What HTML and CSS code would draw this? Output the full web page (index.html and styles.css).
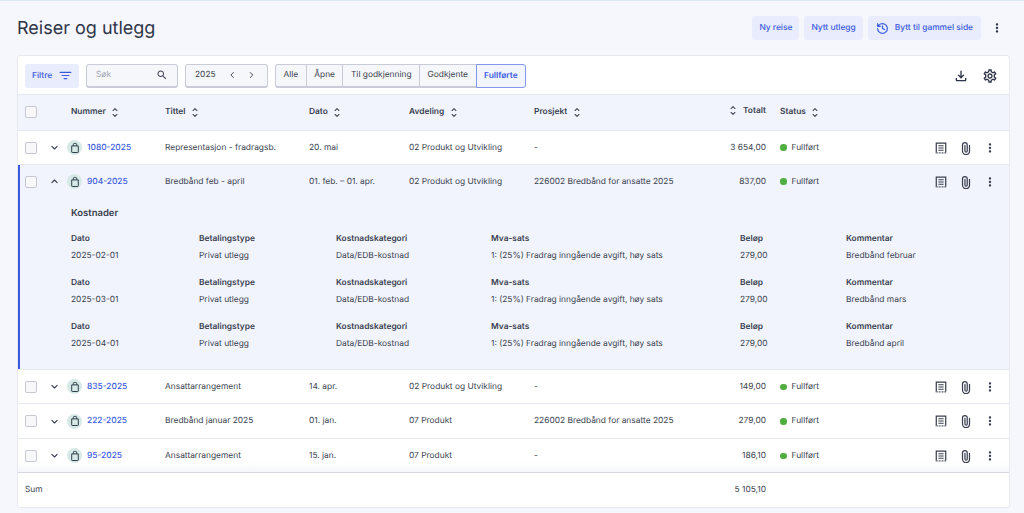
FILE: index.html
```html
<!DOCTYPE html>
<html lang="no">
<head>
  <meta charset="UTF-8" />
  <title>Reiser og utlegg</title>
  <link rel="stylesheet" href="styles.css">
</head>
<body>
  <svg class="sprites" width="0" height="0">
    <defs>
      <symbol id="i-more" viewBox="0 0 24 24"><path fill="currentColor" d="M12 8c1.1 0 2-.9 2-2s-.9-2-2-2-2 .9-2 2 .9 2 2 2zm0 2c-1.1 0-2 .9-2 2s.9 2 2 2 2-.9 2-2-.9-2-2-2zm0 6c-1.1 0-2 .9-2 2s.9 2 2 2 2-.9 2-2-.9-2-2-2z"/></symbol>
      <symbol id="i-sort" viewBox="0 0 10 14"><path fill="none" stroke="currentColor" stroke-width="1.3" stroke-linecap="round" stroke-linejoin="round" d="M2.500 4.500 5 2l2.500 2.500M2.500 9.500 5 12l2.500-2.500"/></symbol>
      <symbol id="i-down" viewBox="0 0 12 12"><path fill="none" stroke="currentColor" stroke-width="1.5" stroke-linecap="round" stroke-linejoin="round" d="M2.500 4.500 6 8l3.500-3.500"/></symbol>
      <symbol id="i-up" viewBox="0 0 12 12"><path fill="none" stroke="currentColor" stroke-width="1.5" stroke-linecap="round" stroke-linejoin="round" d="M2.500 7.500 6 4l3.500 3.500"/></symbol>
      <symbol id="i-bag" viewBox="0 0 16 16"><path fill="none" stroke="currentColor" stroke-width="1.3" stroke-linejoin="round" d="M3.600 5.200h8.800v8a.8.8 0 0 1-.8.8H4.400a.8.8 0 0 1-.8-.8zM5.800 5.200V3.200A1.200 1.200 0 0 1 7 2h2a1.200 1.200 0 0 1 1.200 1.200v2"/></symbol>
      <symbol id="i-receipt" viewBox="0 0 16 16"><path fill="none" stroke="currentColor" stroke-width="1.400" d="M2.600 13.200V2.500h10.800v10.700"/><path fill="none" stroke="currentColor" stroke-width="1.400" stroke-dasharray="1 .8" d="M2 13.600h12"/><path fill="none" stroke="currentColor" stroke-width="1.200" d="M5 5.500h6M5 8h6M5 10.500h6"/></symbol>
      <symbol id="i-clip" viewBox="0 0 16 16"><path fill="none" stroke="currentColor" stroke-width="1.400" stroke-linecap="round" d="M12 5v6.500a4 4 0 0 1-8 0V4.500a2.700 2.700 0 0 1 5.400 0v6.800a1.300 1.300 0 0 1-2.600 0V5"/></symbol>
    </defs>
  </svg>

  <header class="page-head">
    <h1>Reiser og utlegg</h1>
    <div class="head-actions">
      <button class="btn-soft">Ny reise</button>
      <button class="btn-soft">Nytt utlegg</button>
      <button class="btn-soft btn-switch">
        <svg class="icon-history" viewBox="0 0 24 24"><path fill="none" stroke="currentColor" stroke-width="2.200" stroke-linecap="round" stroke-linejoin="round" d="M3 12a9 9 0 1 0 9-9 9.750 9.750 0 0 0-6.740 2.740L3 8M3 3v5h5M12 7v5l4 2"/></svg>
        Bytt til gammel side
      </button>
      <svg class="icon-more head-more"><use href="#i-more"/></svg>
    </div>
  </header>

  <main class="card">
    <div class="toolbar">
      <button class="btn-soft btn-filter">
        Filtre
        <svg class="icon-filter" viewBox="0 0 14 10"><path fill="none" stroke="currentColor" stroke-width="1.300" stroke-linecap="round" d="M1 1.500h12M3.200 5h7.600M5.500 8.500h3"/></svg>
      </button>
      <div class="field search">
        <span>Søk</span>
        <svg class="icon-search" viewBox="0 0 24 24"><path fill="currentColor" d="M15.500 14h-.79l-.28-.27C15.410 12.590 16 11.110 16 9.500 16 5.910 13.090 3 9.500 3S3 5.910 3 9.500 5.910 16 9.500 16c1.610 0 3.090-.59 4.230-1.570l.27.28v.79l5 4.990L20.490 19l-4.990-5zm-6 0C7.010 14 5 11.990 5 9.500S7.010 5 9.500 5 14 7.010 14 9.500 11.990 14 9.500 14z"/></svg>
      </div>
      <div class="field year">
        <span class="year-label">2025</span>
        <svg class="icon-nav" viewBox="0 0 12 12"><path fill="none" stroke="currentColor" stroke-width="1.300" stroke-linecap="round" stroke-linejoin="round" d="M7.500 2.500 4 6l3.500 3.500"/></svg>
        <svg class="icon-nav" viewBox="0 0 12 12"><path fill="none" stroke="currentColor" stroke-width="1.300" stroke-linecap="round" stroke-linejoin="round" d="M4.500 2.500 8 6 4.500 9.500"/></svg>
      </div>
      <div class="segments">
        <span class="segment">Alle</span>
        <span class="segment">Åpne</span>
        <span class="segment">Til godkjenning</span>
        <span class="segment">Godkjente</span>
        <span class="segment active">Fullførte</span>
      </div>
      <div class="tool-icons">
        <svg class="icon-tool" viewBox="0 0 24 24"><path fill="currentColor" d="M18 15v3H6v-3H4v3c0 1.100.9 2 2 2h12c1.100 0 2-.9 2-2v-3h-2zm-1-4-1.410-1.410L13 12.170V4h-2v8.170L8.410 9.590 7 11l5 5 5-5z"/></svg>
        <svg class="icon-tool" viewBox="0 0 24 24"><path fill="currentColor" d="M19.430 12.980c.04-.32.07-.64.07-.98 0-.34-.03-.66-.07-.98l2.110-1.650c.19-.15.24-.42.12-.64l-2-3.460c-.09-.16-.26-.25-.44-.25-.06 0-.12.01-.17.03l-2.490 1c-.52-.4-1.080-.73-1.690-.98l-.38-2.650C14.460 2.180 14.250 2 14 2h-4c-.25 0-.46.18-.49.42l-.38 2.650c-.61.25-1.170.59-1.690.98l-2.490-1c-.06-.02-.12-.03-.18-.03-.17 0-.34.09-.43.25l-2 3.460c-.13.22-.07.49.12.64l2.110 1.650c-.04.32-.07.65-.07.98 0 .33.03.66.07.98l-2.110 1.650c-.19.15-.24.42-.12.64l2 3.460c.09.16.26.25.44.25.06 0 .12-.01.17-.03l2.490-1c.52.4 1.080.73 1.690.98l.38 2.650c.03.24.24.42.49.42h4c.25 0 .46-.18.49-.42l.38-2.650c.61-.25 1.170-.59 1.690-.98l2.490 1c.06.02.12.03.18.03.17 0 .34-.09.43-.25l2-3.460c.12-.22.07-.49-.12-.64l-2.110-1.650zm-1.980-1.710c.04.31.05.52.05.73 0 .21-.02.43-.05.73l-.14 1.130.89.7 1.080.84-.7 1.210-1.270-.51-1.040-.42-.9.68c-.43.32-.84.56-1.250.73l-1.060.43-.16 1.130-.2 1.350h-1.400l-.19-1.350-.16-1.130-1.060-.43c-.43-.18-.83-.41-1.230-.71l-.91-.7-1.060.43-1.270.51-.7-1.210 1.080-.84.89-.7-.14-1.130c-.03-.31-.05-.54-.05-.74s.02-.43.05-.73l.14-1.130-.89-.7-1.080-.84.7-1.210 1.270.51 1.040.42.9-.68c.43-.32.84-.56 1.250-.73l1.060-.43.16-1.130.2-1.350h1.390l.19 1.350.16 1.130 1.060.43c.43.18.83.41 1.230.71l.91.7 1.060-.43 1.270-.51.7 1.210-1.070.85-.89.7.14 1.130zM12 8c-2.210 0-4 1.790-4 4s1.790 4 4 4 4-1.790 4-4-1.790-4-4-4zm0 6c-1.100 0-2-.9-2-2s.9-2 2-2 2 .9 2 2-.9 2-2 2z"/></svg>
      </div>
    </div>

    <div class="row head-row">
      <div class="c-check"><span class="checkbox"></span></div>
      <div class="c-num"><span class="sort">Nummer <svg class="icon-sort"><use href="#i-sort"/></svg></span></div>
      <div><span class="sort">Tittel <svg class="icon-sort"><use href="#i-sort"/></svg></span></div>
      <div><span class="sort">Dato <svg class="icon-sort"><use href="#i-sort"/></svg></span></div>
      <div><span class="sort">Avdeling <svg class="icon-sort"><use href="#i-sort"/></svg></span></div>
      <div><span class="sort">Prosjekt <svg class="icon-sort"><use href="#i-sort"/></svg></span></div>
      <div class="c-total"><span class="sort"><svg class="icon-sort"><use href="#i-sort"/></svg> Totalt</span></div>
      <div class="c-status"><span class="sort">Status <svg class="icon-sort"><use href="#i-sort"/></svg></span></div>
      <div></div>
    </div>

    <div class="row row-first">
      <div class="c-check"><span class="checkbox"></span><svg class="icon-chev"><use href="#i-down"/></svg></div>
      <div class="c-id"><span class="bag"><svg><use href="#i-bag"/></svg></span><a>1080-2025</a></div>
      <div>Representasjon - fradragsb.</div>
      <div>20. mai</div>
      <div>02 Produkt og Utvikling</div>
      <div>-</div>
      <div class="c-total">3 654,00</div>
      <div class="c-status"><i class="dot"></i>Fullført</div>
      <div class="c-actions"><svg class="icon-act"><use href="#i-receipt"/></svg><svg class="icon-act"><use href="#i-clip"/></svg><svg class="icon-act"><use href="#i-more"/></svg></div>
    </div>

    <section class="expanded">
      <div class="row row-open">
        <div class="c-check"><span class="checkbox"></span><svg class="icon-chev"><use href="#i-up"/></svg></div>
        <div class="c-id"><span class="bag"><svg><use href="#i-bag"/></svg></span><a>904-2025</a></div>
        <div>Bredbånd feb - april</div>
        <div>01. feb. – 01. apr.</div>
        <div>02 Produkt og Utvikling</div>
        <div>226002 Bredbånd for ansatte 2025</div>
        <div class="c-total">837,00</div>
        <div class="c-status"><i class="dot"></i>Fullført</div>
        <div class="c-actions"><svg class="icon-act"><use href="#i-receipt"/></svg><svg class="icon-act"><use href="#i-clip"/></svg><svg class="icon-act"><use href="#i-more"/></svg></div>
      </div>
      <div class="costs">
        <h2>Kostnader</h2>
        <div class="cost-row">
          <div><b>Dato</b>2025-02-01</div>
          <div><b>Betalingstype</b>Privat utlegg</div>
          <div><b>Kostnadskategori</b>Data/EDB-kostnad</div>
          <div><b>Mva-sats</b>1: (25%) Fradrag inngående avgift, høy sats</div>
          <div><b>Beløp</b>279,00</div>
          <div><b>Kommentar</b>Bredbånd februar</div>
        </div>
        <div class="cost-row">
          <div><b>Dato</b>2025-03-01</div>
          <div><b>Betalingstype</b>Privat utlegg</div>
          <div><b>Kostnadskategori</b>Data/EDB-kostnad</div>
          <div><b>Mva-sats</b>1: (25%) Fradrag inngående avgift, høy sats</div>
          <div><b>Beløp</b>279,00</div>
          <div><b>Kommentar</b>Bredbånd mars</div>
        </div>
        <div class="cost-row">
          <div><b>Dato</b>2025-04-01</div>
          <div><b>Betalingstype</b>Privat utlegg</div>
          <div><b>Kostnadskategori</b>Data/EDB-kostnad</div>
          <div><b>Mva-sats</b>1: (25%) Fradrag inngående avgift, høy sats</div>
          <div><b>Beløp</b>279,00</div>
          <div><b>Kommentar</b>Bredbånd april</div>
        </div>
      </div>
    </section>

    <div class="row">
      <div class="c-check"><span class="checkbox"></span><svg class="icon-chev"><use href="#i-down"/></svg></div>
      <div class="c-id"><span class="bag"><svg><use href="#i-bag"/></svg></span><a>835-2025</a></div>
      <div>Ansattarrangement</div>
      <div>14. apr.</div>
      <div>02 Produkt og Utvikling</div>
      <div>-</div>
      <div class="c-total">149,00</div>
      <div class="c-status"><i class="dot"></i>Fullført</div>
      <div class="c-actions"><svg class="icon-act"><use href="#i-receipt"/></svg><svg class="icon-act"><use href="#i-clip"/></svg><svg class="icon-act"><use href="#i-more"/></svg></div>
    </div>

    <div class="row">
      <div class="c-check"><span class="checkbox"></span><svg class="icon-chev"><use href="#i-down"/></svg></div>
      <div class="c-id"><span class="bag"><svg><use href="#i-bag"/></svg></span><a>222-2025</a></div>
      <div>Bredbånd januar 2025</div>
      <div>01. jan.</div>
      <div>07 Produkt</div>
      <div>226002 Bredbånd for ansatte 2025</div>
      <div class="c-total">279,00</div>
      <div class="c-status"><i class="dot"></i>Fullført</div>
      <div class="c-actions"><svg class="icon-act"><use href="#i-receipt"/></svg><svg class="icon-act"><use href="#i-clip"/></svg><svg class="icon-act"><use href="#i-more"/></svg></div>
    </div>

    <div class="row row-last">
      <div class="c-check"><span class="checkbox"></span><svg class="icon-chev"><use href="#i-down"/></svg></div>
      <div class="c-id"><span class="bag"><svg><use href="#i-bag"/></svg></span><a>95-2025</a></div>
      <div>Ansattarrangement</div>
      <div>15. jan.</div>
      <div>07 Produkt</div>
      <div>-</div>
      <div class="c-total">186,10</div>
      <div class="c-status"><i class="dot"></i>Fullført</div>
      <div class="c-actions"><svg class="icon-act"><use href="#i-receipt"/></svg><svg class="icon-act"><use href="#i-clip"/></svg><svg class="icon-act"><use href="#i-more"/></svg></div>
    </div>

    <div class="row sum-row">
      <div class="c-sum">Sum</div>
      <div></div>
      <div></div>
      <div></div>
      <div></div>
      <div></div>
      <div class="c-total">5 105,10</div>
      <div></div>
      <div></div>
    </div>
  </main>
</body>
</html>
```

FILE: styles.css
```css
* {
  box-sizing: border-box;
}

html, body {
  height: 100%;
}

body {
  margin: 0;
  overflow: hidden;
  background: #f6f7fc;
  border-top: 1px solid #d9ebf2;
  color: #3a3f4f;
  font-family: Inter, "Liberation Sans", sans-serif;
  font-size: 8.4px;
  text-rendering: geometricPrecision;
  padding: 0 14px 0 17px;
}

.sprites {
  position: absolute;
}

.page-head {
  height: 54px;
  display: flex;
  align-items: center;
  justify-content: space-between;
}

h1 {
  margin: 0;
  font-size: 18px;
  font-weight: 400;
  color: #2f3548;
}

.head-actions {
  display: flex;
  align-items: center;
  gap: 5px;
}

.btn-soft {
  height: 24px;
  padding: 0 7px;
  display: inline-flex;
  align-items: center;
  gap: 6px;
  border: 0;
  border-radius: 3px;
  background: #e8ecfc;
  color: #3a5be0;
  font: 500 8.4px Inter, "Liberation Sans", sans-serif;
  text-rendering: geometricPrecision;
}

.btn-switch {
  padding: 0 8px;
}

.icon-history {
  width: 13px;
  height: 13px;
}

.icon-more {
  width: 14px;
  height: 14px;
  color: #2f3548;
}

.head-more {
  margin: 0 6px 0 4px;
}

.card {
  height: 452.5px;
  background: #fff;
  border: 1px solid #e8e9f0;
  border-radius: 3px;
}

.toolbar {
  height: 38px;
  display: flex;
  align-items: center;
  padding: 1px 7px 0;
}

.btn-filter {
  width: 54px;
  justify-content: space-between;
}

.icon-filter {
  width: 13px;
  height: 9px;
}

.field {
  height: 24px;
  display: flex;
  align-items: center;
  border: 1px solid #c9ccd6;
  border-bottom-width: 2px;
  border-radius: 3px;
  background: #f6f7fa;
}

.search {
  width: 92px;
  margin-left: 7px;
  padding: 0 9px;
  justify-content: space-between;
  color: #9da1ad;
}

.icon-search {
  width: 12px;
  height: 12px;
  color: #3a3f4f;
}

.year {
  width: 83px;
  margin-left: 7px;
  padding-left: 9px;
}

.year-label {
  width: 38px;
}

.icon-nav {
  width: 10px;
  height: 10px;
  margin-right: 11px;
}

.segments {
  display: flex;
  height: 24px;
  margin-left: 7px;
}

.segment {
  display: flex;
  align-items: center;
  padding: 0 7.5px;
  background: #f6f7fa;
  border: 1px solid #c9ccd6;
  border-bottom-width: 2px;
  border-left-width: 0;
}

.segment:first-child {
  border-left-width: 1px;
  border-radius: 3px 0 0 3px;
}

.segment.active {
  border: 1.5px solid #8296ec;
  border-radius: 0 3px 3px 0;
  margin-left: -1px;
  padding: 0 7.5px;
  background: #f3f5fe;
  color: #3a5be0;
  font-weight: 600;
}

.tool-icons {
  margin-left: auto;
  display: flex;
  gap: 13px;
  padding-right: 4px;
}

.icon-tool {
  width: 16px;
  height: 16px;
  color: #2f3548;
}

/* table columns, all rows share these */
.row {
  display: grid;
  grid-template-columns: 49px 98px 144px 100px 125px 146px 86px 168px 1fr;
  align-items: center;
  height: 34.5px;
  padding-top: 1px;
  border-top: 1px solid #e8e9f0;
}

.head-row {
  height: 35.5px;
  padding-top: 0;
  background: #f1f4fd;
  font-weight: 600;
}

.row-first,
.row-open {
  height: 34px;
}

.c-total {
  justify-self: end;
}

.sort {
  display: inline-flex;
  align-items: center;
  gap: 5.5px;
}

.icon-sort {
  width: 8px;
  height: 11px;
}

.c-check {
  display: flex;
  align-items: center;
  padding-left: 7px;
}

.checkbox {
  width: 12px;
  height: 12px;
  border: 1px solid #c5c8d2;
  border-radius: 2px;
  background: #f8f8fb;
}

.icon-chev {
  width: 9px;
  height: 9px;
  margin-left: 13px;
  color: #3a3f4f;
}

.c-num {
  padding-left: 4px;
}

.c-id {
  display: flex;
  align-items: center;
  gap: 5px;
}

.c-id a {
  color: #3a5be0;
  font-weight: 500;
}

.bag {
  width: 15px;
  height: 15px;
  border-radius: 50%;
  background: #d6e9e6;
  display: flex;
  align-items: center;
  justify-content: center;
  color: #2c3a45;
}

.bag svg {
  width: 12px;
  height: 12px;
}

.c-status {
  display: flex;
  align-items: center;
  gap: 5px;
  padding-left: 14px;
}

.dot {
  width: 6.5px;
  height: 6.5px;
  border-radius: 50%;
  background: #4fae3f;
}

.c-actions {
  display: flex;
  align-items: center;
  gap: 10.5px;
}

.icon-act {
  width: 14px;
  height: 14px;
  color: #3a3f4f;
}

.expanded {
  height: 205px;
  background: #f1f4fd;
  box-shadow: inset 2px 0 0 #3a5be0;
}

.costs {
  padding: 10px 0 0 53px;
}

h2 {
  margin: 0 0 15px;
  font-size: 9.5px;
  font-weight: 600;
}

.cost-row {
  display: grid;
  grid-template-columns: 128px 137px 155px 249px 106px 1fr;
  height: 44px;
}

.cost-row b {
  display: block;
  font-weight: 600;
  margin-bottom: 7px;
}

.row-last {
  background: linear-gradient(#fff 70%, #f6f7fc);
}

.sum-row {
  border-top: 1px solid #d5d7e3;
}

.c-sum {
  padding-left: 7px;
}
```
